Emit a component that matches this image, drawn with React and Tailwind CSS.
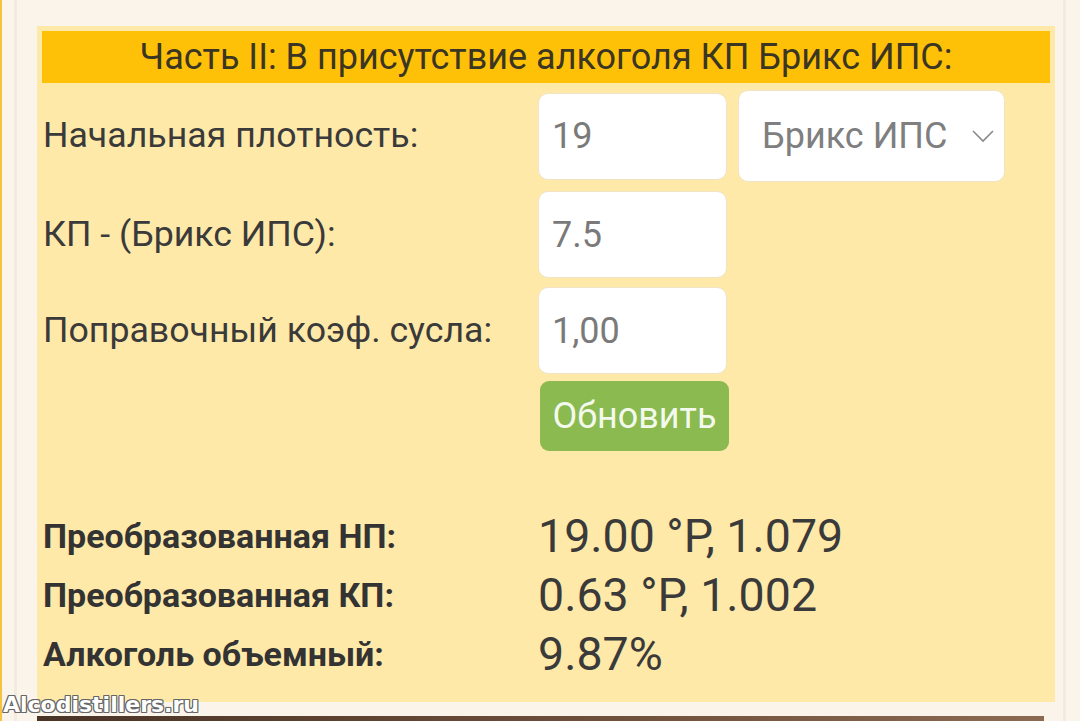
import { useState } from "react";

function Field({ value }) {
  return (
    <input
      defaultValue={value}
      className="w-[189px] h-[87px] rounded-[10px] bg-white border border-[#f1e4c6] pl-[13px] text-[36px] text-[#7a7a7a] outline-none"
    />
  );
}

function Row({ label, className, children }) {
  return (
    <div className={"flex items-center " + className}>
      <div className="w-[496px] pl-[1px] text-[35.7px] text-[#3a3a3a]">{label}</div>
      {children}
    </div>
  );
}

function Result({ label, value }) {
  return (
    <div className="flex items-center h-[59px]">
      <div className="w-[496px] pl-[1px] text-[34px] font-bold text-[#333]">{label}</div>
      <div className="text-[46.5px] text-[#3a3a3a]">{value}</div>
    </div>
  );
}

export default function App() {
  const [unit, setUnit] = useState("brix");

  return (
    <div className="relative w-[1080px] h-[721px] overflow-hidden bg-[#faf4ea] flex font-['Roboto',sans-serif]">
      <div className="w-[2px] bg-[#f5c340]" />
      <div className="w-[12px]" />
      <div className="w-[3px] bg-[#f2ebdf]" />
      <div className="w-[20px]" />

      <div className="w-[1018px] pt-[26px] flex flex-col">
        <div className="shrink-0 h-[676px] bg-[#ffe9a8] p-[5px] flex flex-col">
          <div className="h-[52px] bg-[#ffc107] flex items-center justify-center text-[36px] text-[#3b3524]">
            Часть II: В присутствие алкоголя КП Брикс ИПС:
          </div>

          <Row label="Начальная плотность:" className="mt-[7px] h-[92px]">
            <div className="flex items-center gap-[11px]">
              <Field value="19" />
              <div className="relative">
                <select
                  value={unit}
                  onChange={(e) => setUnit(e.target.value)}
                  className="appearance-none w-[267px] h-[92px] rounded-[10px] bg-white border border-[#f1e4c6] pl-[23px] text-[36px] text-[#7f7f7f] outline-none"
                >
                  <option value="brix">Брикс ИПС</option>
                  <option value="sg">Плотность</option>
                </select>
                <svg
                  className="absolute right-[11px] top-[40px] pointer-events-none"
                  width="22"
                  height="13"
                  viewBox="0 0 22 13"
                  fill="none"
                  stroke="#8a8a8a"
                  strokeWidth="1.6"
                >
                  <path d="M1 1l10 10 10-10" />
                </svg>
              </div>
            </div>
          </Row>

          <Row label="КП - (Брикс ИПС):" className="mt-[9px] h-[87px]">
            <Field value="7.5" />
          </Row>

          <Row label="Поправочный коэф. сусла:" className="mt-[9px] h-[87px]">
            <Field value="1,00" />
          </Row>

          <div className="mt-[7px] pl-[498px]">
            <button className="w-[189px] h-[70px] rounded-[9px] bg-[#8bba50] text-[36px] text-[#f3f9ec]">
              Обновить
            </button>
          </div>

          <div className="mt-[56px] flex flex-col">
            <Result label="Преобразованная НП:" value="19.00 °P, 1.079" />
            <Result label="Преобразованная КП:" value="0.63 °P, 1.002" />
            <Result label="Алкоголь объемный:" value="9.87%" />
          </div>
        </div>
        <div className="shrink-0 mt-[14px] w-[1007px] h-[10px] bg-gradient-to-r from-[#4a3426] via-[#6b4c38] to-[#8c6a52]" />
      </div>

      <div className="w-[8px]" />
      <div className="w-[3px] bg-[#f2ebdf]" />

      <div className="absolute left-[3px] top-[694px] font-['DejaVu_Sans',sans-serif] font-bold text-[22px] leading-none text-white [text-shadow:-1px_-1px_0_#666,1px_-1px_0_#666,-1px_1px_0_#666,1px_1px_0_#666,0_1px_0_#666,0_-1px_0_#666,1px_0_0_#666,-1px_0_0_#666]">
        Alcodistillers.ru
      </div>
    </div>
  );
}
